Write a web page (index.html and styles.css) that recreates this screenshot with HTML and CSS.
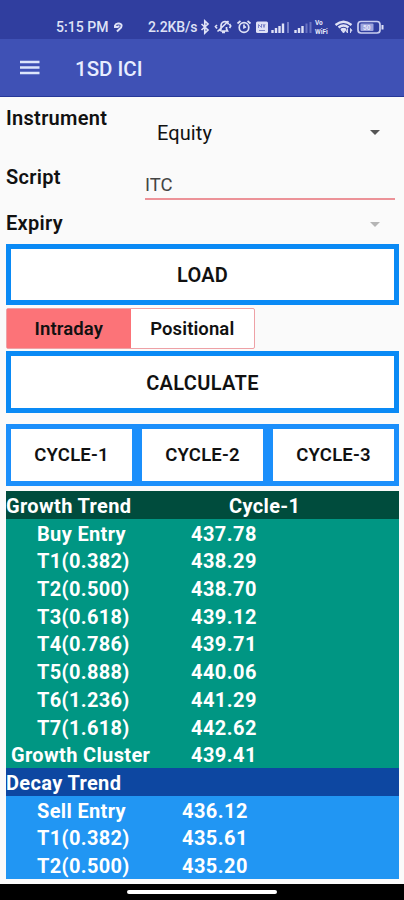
FILE: index.html
```
<!DOCTYPE html>
<html lang="en">
<head>
  <meta charset="UTF-8">
  <title>1SD ICI</title>
  <meta name="viewport" content="width=device-width, initial-scale=1.0">
  <link rel="stylesheet" href="styles.css">
</head>
<body>

  <!-- Status bar -->
  <div class="status-bar">
    <span class="time">5:15 PM</span>
    <svg class="swirl" width="10" height="11" viewBox="0 0 10 11"><path d="M2 6V3.500Q3 1 6 1.500T8.500 4Q8.500 6 6.500 7L4 9.500M2 4.500Q5 6 6 3.500" fill="none" stroke="#dfe2f6" stroke-width="2"/></svg>
    <span class="speed">2.2KB/s</span>
    <svg class="status-icons" width="186" height="18" viewBox="198 18 186 18" fill="none" stroke="#dfe2f6" stroke-width="1.700">
      <!-- bluetooth -->
      <path d="M201.500 24l6.500 6-3.200 3v-12l3.200 3-6.500 6"/>
      <!-- muted bell -->
      <path d="M219 30.500l2-1.500v-3q0-4 4-4.500 3 0 3.500 3M220.500 31h7l-1-2v-2M222 32.500h3M217.500 31.500l11-10.500M217 25l-1.500 1.500 1.500 2M229.500 24l1.200 2-1.200 2"/>
      <!-- alarm -->
      <circle cx="244" cy="27.500" r="4.800"/>
      <path d="M244 24.500v3.200l2-1M237.500 23.500l3-2.500M250.500 23.500l-3-2.500"/>
      <!-- sim card -->
      <rect x="256" y="21.500" width="12" height="11.500" rx="1.500" fill="#dfe2f6" stroke="none"/>
      <path d="M258.500 28v-3.500l3 3v-3.500M263 24l1 3.500 1-3.500M259 30.500h6" stroke="#7d86ca" stroke-width="1"/>
      <!-- signals -->
      <path d="M272.500 33v-3M276 33v-5M279.500 33v-7M283 33v-9.500" stroke-width="2.400"/>
      <path d="M288 33V22" stroke="#7680c8" stroke-width="2"/>
      <path d="M295.500 33v-3M299 33v-5M302.500 33v-7" stroke-width="2.400"/>
      <path d="M306.500 33v-9.500M310.500 33V22" stroke="#6872c1" stroke-width="2"/>
      <!-- wifi -->
      <path d="M335.500 25q8-6.500 16 0M338.500 27.500q5-4 10 0M341 30q2.500-2 5 0" stroke-width="2.300"/>
      <path d="M341.500 30.500h4l-2 2.500zM347.500 28.500v4.500l-1.500-2M350.500 33v-4.500l1.500 2" fill="#dfe2f6" stroke-width=".8"/>
      <!-- battery -->
      <rect x="358" y="21.500" width="22" height="11.500" rx="3" stroke="#c9cef0" stroke-width="1.700"/>
      <rect x="360.500" y="23.500" width="13" height="7.500" rx="1" fill="#9da5dd" stroke="none"/>
      <path d="M382.500 25v4.500" stroke-width="2"/>
      <g class="tiny" fill="#e6e8fa" stroke="none">
        <text x="315" y="25">Vo</text>
        <text x="315" y="33.500">WiFi</text>
        <text x="363" y="29.500">50</text>
      </g>
    </svg>
  </div>

  <!-- App bar -->
  <header class="app-bar">
    <svg width="20" height="16" viewBox="0 0 20 16"><path d="M0 2h19.500M0 7.500h19.500M0 13h19.500" stroke="#dce5fb" stroke-width="2.500"/></svg>
    <h1>1SD ICI</h1>
  </header>

  <main>
    <div class="form">
      <div class="field instrument">
        <label>Instrument</label>
        <div class="select">Equity <span class="arrow"></span></div>
      </div>
      <div class="field script">
        <label>Script</label>
        <div class="input">ITC</div>
      </div>
      <div class="field expiry">
        <label>Expiry</label>
        <div class="select"><span class="arrow disabled"></span></div>
      </div>
    </div>

    <button class="btn">LOAD</button>
    <div class="toggle">
      <button class="active">Intraday</button>
      <button>Positional</button>
    </div>
    <button class="btn calculate">CALCULATE</button>

    <div class="cycles">
      <button class="btn">CYCLE-1</button>
      <button class="btn">CYCLE-2</button>
      <button class="btn">CYCLE-3</button>
    </div>

    <div class="table growth">
      <div class="row head"><span>Growth Trend</span><span class="cycle">Cycle-1</span></div>
      <div class="row"><span>Buy Entry</span><span class="value">437.78</span></div>
      <div class="row"><span>T1(0.382)</span><span class="value">438.29</span></div>
      <div class="row"><span>T2(0.500)</span><span class="value">438.70</span></div>
      <div class="row"><span>T3(0.618)</span><span class="value">439.12</span></div>
      <div class="row"><span>T4(0.786)</span><span class="value">439.71</span></div>
      <div class="row"><span>T5(0.888)</span><span class="value">440.06</span></div>
      <div class="row"><span>T6(1.236)</span><span class="value">441.29</span></div>
      <div class="row"><span>T7(1.618)</span><span class="value">442.62</span></div>
      <div class="row cluster"><span>Growth Cluster</span><span class="value">439.41</span></div>
    </div>
    <div class="table decay">
      <div class="row head"><span>Decay Trend</span></div>
      <div class="row"><span>Sell Entry</span><span class="value">436.12</span></div>
      <div class="row"><span>T1(0.382)</span><span class="value">435.61</span></div>
      <div class="row"><span>T2(0.500)</span><span class="value">435.20</span></div>
    </div>
  </main>

  <!-- Gesture bar -->
  <div class="nav-bar"><div class="handle"></div></div>

</body>
</html>
```

FILE: styles.css
```
* { margin: 0; padding: 0; box-sizing: border-box; }
body {
  font-family: Roboto, "Liberation Sans", sans-serif;
  background: #fafafa;
  color: #111;
  height: 900px;
  display: flex;
  flex-direction: column;
  overflow: hidden;
}

.status-bar {
  height: 39px;
  flex-shrink: 0;
  background: #303e9f;
  color: #dfe2f6;
  display: flex;
  align-items: flex-start;
  padding: 18px 0 0 56px;
  font-size: 14px;
  line-height: 18px;
  font-weight: 500;
  white-space: nowrap;
}
.time { width: 57px; letter-spacing: 0.05px; }
.swirl { margin-top: 4px; }
.speed { width: 50px; margin-left: 25px; font-size: 14px; letter-spacing: -0.1px; }
.status-icons { flex-shrink: 0; }
.tiny { font-size: 6.5px; font-weight: 700; }

.app-bar {
  height: 58px;
  flex-shrink: 0;
  background: #3f51b5;
  border-bottom: 1px solid #263898;
  color: #e8edff;
  display: flex;
  align-items: center;
  padding: 2px 20px 0;
  gap: 35px;
}
.app-bar svg { margin-top: -1px; }
.app-bar h1 { font-size: 20.5px; font-weight: 500; }

main { padding: 0 5px 0 6px; height: 787px; }

.form { height: 147px; font-size: 20px; }
.field { display: flex; }
.field label { width: 139px; font-weight: 600; line-height: 24px; letter-spacing: 0.3px; flex-shrink: 0; }
.instrument { height: 65px; padding-top: 9px; }
.script { height: 48px; padding-top: 3px; }
.expiry { height: 34px; padding-top: 1px; }
.select {
  flex: 1;
  display: flex;
  align-items: center;
  justify-content: space-between;
  height: 24px;
  padding: 0 19px 0 12px;
  letter-spacing: 0.1px;
}
.instrument .select { margin-top: 15px; }
.instrument .arrow { margin-top: -2px; }
.expiry .select { margin-top: 1px; }
.arrow {
  border: 5px solid transparent;
  border-top-color: #555;
  border-bottom: 0;
  margin-left: auto;
}
.arrow.disabled { border-top-color: #b5b5b5; }
.input {
  width: 250px;
  height: 35px;
  padding-top: 8px;
  border-bottom: 2px solid #ec9298;
  color: #444;
  font-size: 18.5px;
  line-height: 24px;
}

button { font-family: inherit; color: #111; }
.btn {
  display: block;
  width: 100%;
  height: 61px;
  background: #fff;
  border: 5px solid #0a8af5;
  font-size: 20px;
  font-weight: 600;
  letter-spacing: 0.2px;
}
.toggle {
  display: flex;
  width: 249px;
  height: 41px;
  margin: 3px 0 2px;
  border: 1px solid #eea1a6;
  border-radius: 2px;
  background: #fff;
}
.toggle button {
  flex: 1;
  border: 0;
  background: none;
  font-size: 18.5px;
  font-weight: 600;
  letter-spacing: 0.1px;
}
.toggle .active { background: #fc7378; }
.calculate { height: 62px; padding-top: 1px; letter-spacing: 0.35px; }

.cycles { display: flex; margin: 11px 0 5px; }
.cycles .btn { flex: 1; height: 62px; font-size: 18.5px; border-color: #1b8ffb; }

.table { color: #fff; font-size: 20px; font-weight: 700; letter-spacing: 0.35px; }
.row { display: flex; height: 27.7px; line-height: 30px; padding-left: 31px; white-space: nowrap; }
.row span:first-child { width: 154px; flex-shrink: 0; }
.row.head { padding-left: 0; }
.row.head span:first-child { width: 223px; }
.row.cluster { padding-left: 5px; }
.row.cluster span:first-child { width: 180px; }
.row .value { letter-spacing: 0.45px; }
.growth { background: #009683; }
.growth .head { background: #004c3d; }
.decay { background: #2196f3; }
.decay .head { background: #0d47a1; }
.decay .row:not(.head) span:first-child { width: 145px; }

.nav-bar {
  height: 16px;
  flex-shrink: 0;
  background: #000;
  display: flex;
  justify-content: center;
  padding-top: 6px;
}
.handle { width: 150px; height: 4px; border-radius: 2px; background: #fff; }
```
